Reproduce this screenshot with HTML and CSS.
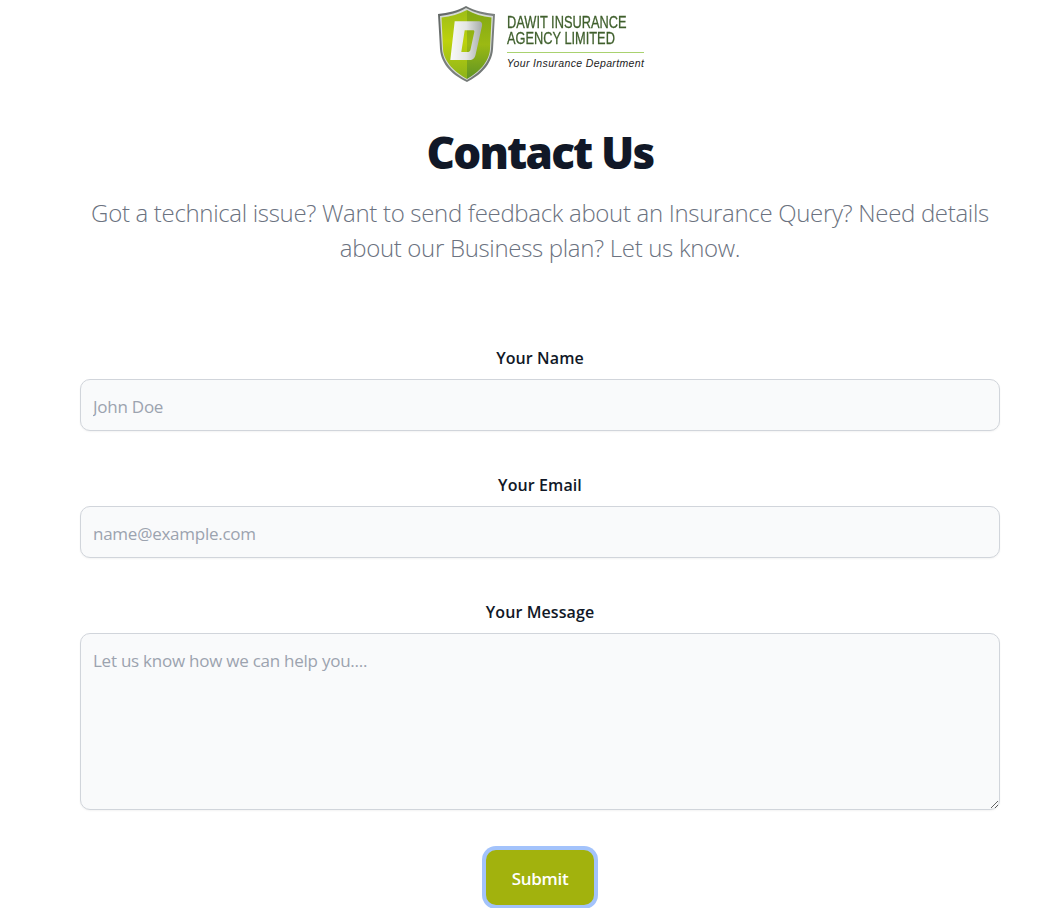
FILE: index.html
```html
<!DOCTYPE html>
<html lang="en">
<head>
<meta charset="utf-8">
<title>Contact Us</title>
<link rel="stylesheet" href="styles.css">
</head>
<body>
<div class="page">
<header class="logo-bar">
  <a class="logo" href="#">
    <svg class="shield" viewBox="0 0 60 78" width="60" height="78" aria-hidden="true">
      <defs>
        <linearGradient id="rim" x1="0" y1="0" x2="1" y2="1">
          <stop offset="0" stop-color="#5f6462"/><stop offset=".5" stop-color="#7d8280"/><stop offset="1" stop-color="#6d7270"/>
        </linearGradient>
        <linearGradient id="left" x1="0" y1="0" x2="0" y2="1">
          <stop offset="0" stop-color="#9dbd17"/><stop offset=".45" stop-color="#bdd20c"/><stop offset="1" stop-color="#8db31a"/>
        </linearGradient>
        <linearGradient id="right" x1="0" y1="0" x2="0" y2="1">
          <stop offset="0" stop-color="#82a814"/><stop offset=".5" stop-color="#9bb913"/><stop offset="1" stop-color="#5f9424"/>
        </linearGradient>
        <linearGradient id="dee" x1="0" y1="0" x2="1" y2="0">
          <stop offset="0" stop-color="#f8f9f8"/><stop offset=".5" stop-color="#e4e6e5"/><stop offset="1" stop-color="#a6abaa"/>
        </linearGradient>
      </defs>
      <g class="shield-art">
        <path d="M30 1 C39 6 49 8 59 9 L57 44 C56 60 43 71 31 77 C18 71 5 60 4 44 L2 9 C12 8 21 6 30 1 Z" fill="url(#rim)"/>
        <path d="M30 3 C39 8 48 10 57 11 L55 44 C54 58 42 69 31 75 C19 69 7 58 6 44 L4 11 C13 10 22 8 30 3 Z" fill="#d6dad6"/>
        <path d="M31 5 L31 74 C20 68 7.500 57 7 44 L5.500 12.500 C15 11.500 23 9 31 5 Z" fill="url(#left)"/>
        <path d="M31 5 C38 9 46 11.500 55.500 12.500 L54 44 C53.500 57 42 68 31 74 Z" fill="url(#right)"/>
        <path d="M18.700 16.300 L42 16.300 C45.500 16.300 46.500 18 46 21 L39.500 50 C38.500 53.500 37 55 33.500 55 L14.300 55 Z M28.700 25.300 L25.300 47 L31.500 47 C33 47 34 46.500 34.400 45 L38.300 27 C38.500 25.800 38 25.300 37 25.300 Z" fill="url(#dee)" fill-rule="evenodd"/>
      </g>
    </svg>
    <span class="brand">
      <span class="brand-name"><span class="brand-name-text">DAWIT INSURANCE<br>AGENCY LIMITED</span></span>
      <span class="brand-tag">Your Insurance Department</span>
    </span>
  </a>
</header>
<main class="contact">
  <h1 class="title">Contact Us</h1>
  <p class="lead">Got a technical issue? Want to send feedback about an Insurance Query? Need details about our Business plan? Let us know.</p>
  <form class="form">
    <div class="field">
      <label class="label" for="name">Your Name</label>
      <input class="control" id="name" type="text" placeholder="John Doe">
    </div>
    <div class="field">
      <label class="label" for="email">Your Email</label>
      <input class="control" id="email" type="email" placeholder="name@example.com">
    </div>
    <div class="field">
      <label class="label" for="message">Your Message</label>
      <textarea class="control area" id="message" placeholder="Let us know how we can help you...."></textarea>
    </div>
    <button class="submit" type="submit">Submit</button>
  </form>
</main>
</div>
</body>
</html>
```
FILE: styles.css
```css
* { box-sizing: border-box; }
html, body { height: 100%; }
body {
  margin: 0;
  overflow: hidden;
  background: #fff;
  color: #111827;
  font-family: "Open Sans", "Noto Sans", sans-serif;
}
.page { width: 1080px; }
.logo-bar { display: flex; justify-content: center; height: 90px; padding-top: 5px; }
.logo { display: flex; gap: 11px; color: inherit; text-decoration: none; height: 80px; }
.shield { display: block; }
.shield-art { filter: blur(0.35px); }
.brand { display: flex; flex-direction: column; padding-top: 10px; }
.brand-name {
  border-bottom: 1px solid #a9d26f;
  padding-bottom: 6px;
  width: 137px;
}
.brand-name-text {
  display: block;
  font-family: "Liberation Sans", sans-serif;
  font-size: 16px;
  line-height: 15.500px;
  -webkit-text-stroke: 0.3px #3f5f2c;
  color: #3f5f2c;
  white-space: nowrap;
  transform: scaleX(0.8);
  transform-origin: left center;
}
.brand-tag {
  font-family: "Liberation Sans", sans-serif;
  font-style: italic;
  font-size: 10.500px;
  line-height: 12px;
  letter-spacing: 0.370px;
  margin-top: 4px;
  color: #222;
  white-space: nowrap;
}
.contact { padding: 0 80px; }
.title {
  margin: 34px 0 0;
  text-align: center;
  font-size: 44px;
  line-height: 56px;
  font-weight: 800;
  letter-spacing: -1.800px;
  color: #111827;
}
.lead {
  margin: 15px auto 0;
  width: 920px;
  text-align: center;
  font-size: 24px;
  line-height: 35px;
  font-weight: 300;
  letter-spacing: -0.320px;
  color: #6b7280;
}
.form { display: flex; flex-direction: column; align-items: center; margin-top: 81px; }
.field { width: 920px; display: flex; flex-direction: column; }
.field + .field { margin-top: 42px; }
.label {
  text-align: center;
  font-size: 16px;
  line-height: 24px;
  font-weight: 600;
  letter-spacing: 0.100px;
  margin-bottom: 9px;
  color: #111827;
}
.control {
  width: 100%;
  height: 52px;
  padding: 13px 12px 11px;
  border: 1px solid #d1d5db;
  border-radius: 10px;
  background: #f9fafb;
  font: inherit;
  font-size: 17px;
  letter-spacing: -0.250px;
  color: #111827;
  box-shadow: 0 1px 2px rgba(0, 0, 0, 0.05);
  display: block;
}
.control::placeholder { color: #9ca3af; opacity: 1; }
.area { height: 177px; resize: vertical; padding-top: 15px; }
.submit {
  width: 108px;
  height: 55px;
  margin-top: 40px;
  padding: 2px 0 0;
  border: 0;
  border-radius: 10px;
  background: #a2b20d;
  color: #fff;
  font: inherit;
  font-size: 17px;
  font-weight: 600;
  letter-spacing: -0.300px;
  box-shadow: 0 0 0 4px #a3c3fb;
}
```
